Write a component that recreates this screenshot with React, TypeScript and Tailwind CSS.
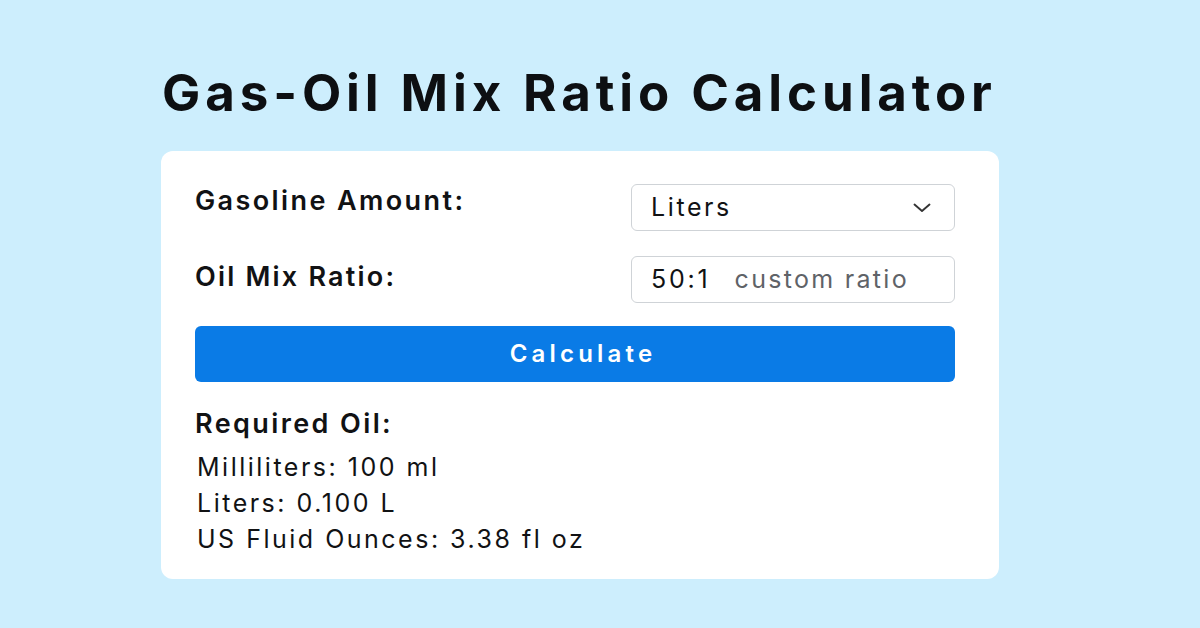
export default function App() {
  return (
    <main
      className="w-[1200px] h-[628px] bg-[#cdeefd] text-[#111214] overflow-hidden"
      style={{ fontFamily: "Inter, 'Noto Sans', sans-serif" }}
    >
      <div className="pl-[162px] pt-[64px]">
        <h1 className="text-[51px] leading-[58px] font-bold tracking-[4.9px] text-[#0d0f12] whitespace-nowrap">
          Gas-Oil Mix Ratio Calculator
        </h1>

        <section className="mt-[29px] -ml-[1px] w-[838px] h-[428px] bg-white rounded-[12px] pl-[34px] pr-[44px] pt-[33px]">
          {/* Gasoline amount */}
          <div className="flex items-start justify-between">
            <label className="mt-[1px] text-[27px] leading-[32px] font-semibold tracking-[2.4px]">
              Gasoline Amount:
            </label>
            <div className="w-[324px] h-[47px] border border-[#cfd3d7] rounded-[6px] flex items-center justify-between pl-[19px] pr-[22px]">
              <span className="text-[25px] tracking-[2.6px]">Liters</span>
              <svg width="20" height="12" viewBox="0 0 20 12" fill="none">
                <path d="M2.5 2.5 10 9 17.5 2.5" stroke="#333" strokeWidth="1.9" strokeLinecap="round" strokeLinejoin="round" />
              </svg>
            </div>
          </div>

          {/* Ratio */}
          <div className="flex items-start justify-between mt-[25px]">
            <label className="mt-[5px] text-[27px] leading-[32px] font-semibold tracking-[2.2px]">
              Oil Mix Ratio:
            </label>
            <div className="w-[324px] h-[47px] border border-[#cfd3d7] rounded-[6px] flex items-center pl-[19px]">
              <span className="text-[25px] tracking-[2.8px]">50:1</span>
              <span className="text-[25px] text-[#5f6368] ml-[24px] tracking-[2.3px]">custom ratio</span>
            </div>
          </div>

          <button className="mt-[23px] w-[760px] h-[56px] rounded-[6px] bg-[#0a7be6] text-white text-[24px] font-semibold tracking-[4.2px] flex items-center justify-center pl-[16px]">
            Calculate
          </button>

          {/* Results */}
          <div className="mt-[26px]">
            <h2 className="text-[27px] leading-[32px] font-semibold tracking-[2.4px]">Required Oil:</h2>
            <div className="mt-[9px] pl-[2px] text-[25px] leading-[36px] tracking-[2.5px]">
              <p>Milliliters: 100 ml</p>
              <p>Liters: 0.100 L</p>
              <p>US Fluid Ounces: 3.38 fl oz</p>
            </div>
          </div>
        </section>
      </div>
    </main>
  );
}
